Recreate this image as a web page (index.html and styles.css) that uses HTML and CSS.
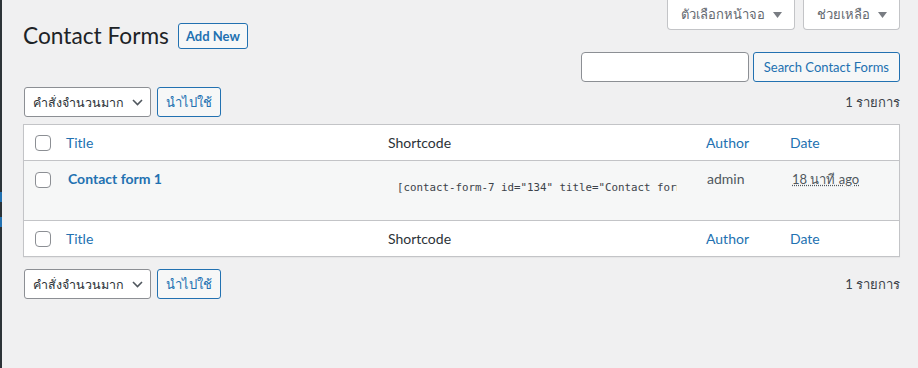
FILE: index.html
```html
<!DOCTYPE html>
<html>
<head>
    <title>Contact Forms</title>
    <link rel="stylesheet" href="styles.css">
</head>
<body>
    <div class="layout">
        <!-- edge of the admin menu -->
        <div class="menu-edge">
            <span class="menu-mark"></span>
            <span class="menu-mark"></span>
        </div>

        <div class="content">
            <div class="top">
                <div class="title-row">
                    <h1>Contact Forms</h1>
                    <a class="add-new" href="#">Add New</a>
                </div>

                <div class="top-right">
                    <div class="screen-links">
                        <button class="screen-tab" type="button">ตัวเลือกหน้าจอ
                            <svg width="9" height="6" viewBox="0 0 9 6"><polygon points="0,0 9,0 4.5,6" fill="#787c82"/></svg>
                        </button>
                        <button class="screen-tab" type="button">ช่วยเหลือ
                            <svg width="9" height="6" viewBox="0 0 9 6"><polygon points="0,0 9,0 4.5,6" fill="#787c82"/></svg>
                        </button>
                    </div>
                    <form class="search-box">
                        <input type="search" class="search-input">
                        <input type="submit" class="button" value="Search Contact Forms">
                    </form>
                </div>
            </div>

            <div class="tablenav tablenav-top">
                <div class="select-wrap">
                    <select class="bulk-select">
                        <option>คำสั่งจำนวนมาก</option>
                    </select>
                    <svg class="chevron" width="11" height="7" viewBox="0 0 11 7"><polyline points="1,1 5.5,5.5 10,1" fill="none" stroke="#50575e" stroke-width="1.6"/></svg>
                </div>
                <input type="submit" class="button apply" value="นำไปใช้">
                <span class="num-items">1 รายการ</span>
            </div>

            <table class="list-table">
                <thead>
                    <tr>
                        <td class="check-column"><span class="checkbox"></span></td>
                        <th class="col-title"><a href="#">Title</a></th>
                        <th class="col-shortcode">Shortcode</th>
                        <th class="col-author"><a href="#">Author</a></th>
                        <th class="col-date"><a href="#">Date</a></th>
                    </tr>
                </thead>
                <tbody>
                    <tr class="alt">
                        <th class="check-column"><span class="checkbox"></span></th>
                        <td class="col-title">
                            <strong><a class="row-title" href="#">Contact form 1</a></strong>
                            <div class="row-actions">Edit | Duplicate</div>
                        </td>
                        <td class="col-shortcode">
                            <input type="text" class="code" readonly value='[contact-form-7 id="134" title="Contact form 1"]'>
                        </td>
                        <td class="col-author">admin</td>
                        <td class="col-date"><abbr title="18 นาที ago">18 นาที ago</abbr></td>
                    </tr>
                </tbody>
                <tfoot>
                    <tr>
                        <td class="check-column"><span class="checkbox"></span></td>
                        <th class="col-title"><a href="#">Title</a></th>
                        <th class="col-shortcode">Shortcode</th>
                        <th class="col-author"><a href="#">Author</a></th>
                        <th class="col-date"><a href="#">Date</a></th>
                    </tr>
                </tfoot>
            </table>

            <div class="tablenav tablenav-bottom">
                <div class="select-wrap">
                    <select class="bulk-select">
                        <option>คำสั่งจำนวนมาก</option>
                    </select>
                    <svg class="chevron" width="11" height="7" viewBox="0 0 11 7"><polyline points="1,1 5.5,5.5 10,1" fill="none" stroke="#50575e" stroke-width="1.6"/></svg>
                </div>
                <input type="submit" class="button apply" value="นำไปใช้">
                <span class="num-items">1 รายการ</span>
            </div>
        </div>
    </div>
</body>
</html>
```

FILE: styles.css
```css
body {
    margin: 0;
    background: #f0f0f1;
    color: #3c434a;
    font-family: Lato, "Noto Sans", sans-serif;
    font-size: 13px;
}

a {
    color: #2271b1;
    text-decoration: none;
}

.layout {
    display: flex;
    min-height: 100vh;
}

.menu-edge {
    width: 2px;
    background: #2c3338;
    display: flex;
    flex-direction: column;
    gap: 15px;
    padding-top: 192px;
}

.menu-mark {
    height: 10px;
    background: #2271b1;
}

.content {
    flex: 1;
    padding: 0 18px 0 21px;
}

/* Header area */
.top {
    display: flex;
    justify-content: space-between;
    align-items: flex-start;
}

.title-row {
    display: flex;
    align-items: center;
    gap: 9px;
    padding-top: 21px;
}

h1 {
    margin: 0;
    font-size: 22.7px;
    font-weight: 400;
    line-height: 30px;
    color: #1d2327;
}

.add-new {
    display: inline-block;
    height: 24px;
    line-height: 24px;
    padding: 0 7px;
    border: 1px solid #2271b1;
    border-radius: 3px;
    background: #f6f7f7;
    font-size: 13px;
    font-weight: 700;
}

.top-right {
    display: flex;
    flex-direction: column;
    align-items: flex-end;
}

.screen-links {
    display: flex;
    gap: 8px;
}

.screen-tab {
    display: flex;
    align-items: center;
    gap: 8px;
    height: 30px;
    padding: 0 12px 0 13px;
    border: 1px solid #c3c4c7;
    border-top: none;
    border-radius: 0 0 4px 4px;
    background: #fff;
    color: #646970;
    font-family: inherit;
    font-size: 13px;
}

.search-box {
    display: flex;
    gap: 4px;
    margin-top: 22px;
}

.search-input {
    width: 168px;
    height: 30px;
    box-sizing: border-box;
    border: 1px solid #8c8f94;
    border-radius: 4px;
    background: #fff;
    margin: 0;
}

.button {
    height: 30px;
    box-sizing: border-box;
    padding: 0 10px;
    margin: 0;
    border: 1px solid #2271b1;
    border-radius: 3px;
    background: #f6f7f7;
    color: #2271b1;
    font-family: inherit;
    font-size: 13px;
    cursor: pointer;
}

.apply {
    width: 64px;
    padding: 0;
}

/* Table nav */
.tablenav {
    display: flex;
    align-items: center;
    gap: 6px;
    height: 30px;
}

.tablenav-top {
    margin-top: 5px;
}

.tablenav-bottom {
    margin-top: 12px;
}

.select-wrap {
    position: relative;
    margin-left: 1px;
}

.bulk-select {
    appearance: none;
    height: 30px;
    width: 127px;
    padding: 0 22px 0 8px;
    border: 1px solid #8c8f94;
    border-radius: 3px;
    background: #fff;
    color: #2c3338;
    font-family: inherit;
    font-size: 12.5px;
}

.chevron {
    position: absolute;
    right: 8px;
    top: 12px;
    pointer-events: none;
}

.num-items {
    margin-left: auto;
    color: #3c434a;
}

/* List table */
.list-table {
    width: 100%;
    margin-top: 7px;
    border: 1px solid #c3c4c7;
    border-spacing: 0;
    background: #fff;
    box-shadow: 0 1px 1px rgba(0, 0, 0, 0.04);
    table-layout: fixed;
}

.list-table th,
.list-table td {
    text-align: left;
    font-weight: 400;
    font-size: 14px;
    line-height: 19px;
}

.list-table thead th,
.list-table thead td,
.list-table tfoot th,
.list-table tfoot td {
    padding: 8px 10px;
    height: 19px;
    color: #2c3338;
}

.list-table thead th,
.list-table thead td {
    border-bottom: 1px solid #c3c4c7;
}

.list-table tfoot th,
.list-table tfoot td {
    border-top: 1px solid #c3c4c7;
}

.list-table .check-column {
    width: 21px;
    padding: 0 0 0 11px;
    vertical-align: middle;
}

.list-table tbody .check-column {
    vertical-align: top;
    padding-top: 11px;
}

.checkbox {
    display: block;
    width: 14px;
    height: 14px;
    border: 1px solid #8c8f94;
    border-radius: 4px;
    background: #fff;
}

.col-shortcode {
    width: 298px;
}

.col-author {
    width: 64px;
}

.col-date {
    width: 99px;
}

.alt {
    background: #f6f7f7;
}

.alt td {
    padding: 8px 10px;
    height: 43px;
    vertical-align: top;
    color: #50575e;
}

.row-title {
    display: block;
    padding-left: 2px;
    font-weight: 700;
}

.row-actions {
    visibility: hidden;
    font-size: 13px;
    padding-top: 2px;
}

.code {
    width: 100%;
    box-sizing: border-box;
    margin-top: 5px;
    padding: 4px 9px;
    border: none;
    background: transparent;
    color: #3c434a;
    font-family: "DejaVu Sans Mono", "Liberation Mono", monospace;
    font-size: 10.8px;
    line-height: 20px;
    outline: none;
}

.alt .col-author {
    padding-left: 11px;
    color: #50575e;
}

.alt .col-date {
    padding-left: 12px;
}

abbr {
    font-size: 13px;
    text-decoration: underline dotted;
    color: #50575e;
}
```
